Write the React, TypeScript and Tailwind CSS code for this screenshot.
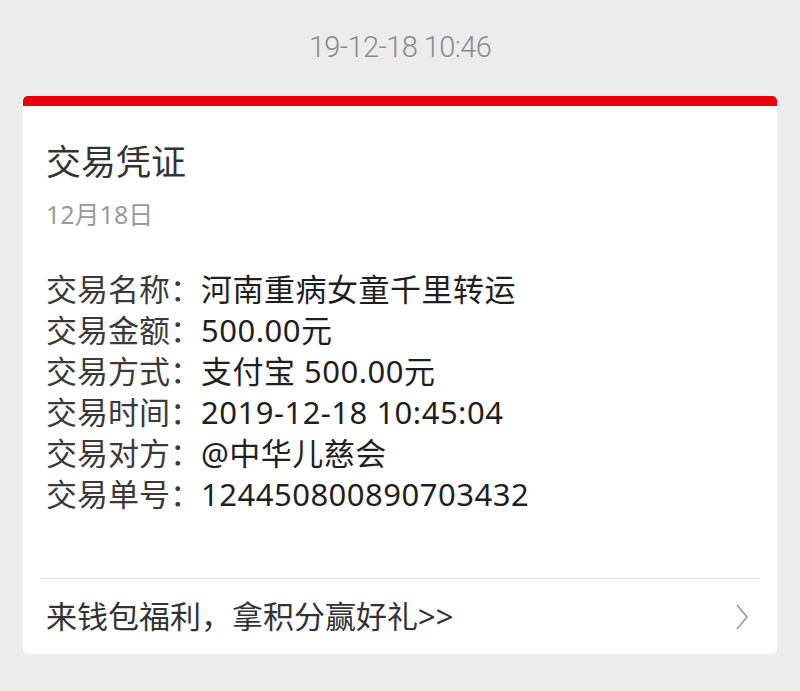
const rows: [string, string][] = [
  ["交易名称：", "河南重病女童千里转运"],
  ["交易金额：", "500.00元"],
  ["交易方式：", "支付宝 500.00元"],
  ["交易时间：", "2019-12-18 10:45:04"],
  ["交易对方：", "@中华儿慈会"],
  ["交易单号：", "124450800890703432"],
];

const cjk = { fontFamily: '"Noto Sans", "Noto Sans CJK SC", sans-serif' };

export default function App() {
  return (
    <div className="flex min-h-[691px] w-[800px] flex-col bg-[#ececec]" style={cjk}>
      {/* 时间戳 */}
      <div className="flex h-[96px] items-center justify-center">
        <span
          className="text-[29px] font-light tracking-[-0.6px] text-[#8a8a8a]"
          style={{ fontFamily: 'Roboto, "Noto Sans", sans-serif' }}
        >
          19-12-18 10:46
        </span>
      </div>

      {/* 凭证卡片 */}
      <div className="mx-[23px] overflow-hidden rounded-[5px] border-t-[10px] border-[#e8000b] bg-white">
        <div className="px-[23px] pt-[36px]">
          <p className="text-[35px] leading-[40px] text-[#333]">交易凭证</p>
          <p className="mt-[17px] text-[25px] leading-[30px] text-[#9a9a9a]">12月18日</p>

          <ul className="mt-[40px]">
            {rows.map(([k, v]) => (
              <li key={k} className="flex h-[41px] items-center text-[31px] leading-[41px]">
                <span className="text-[#3a3a3a]">{k}</span>
                <span className="tracking-[0.5px] text-[#1f1f1f]">{v}</span>
              </li>
            ))}
          </ul>
        </div>

        <div className="mx-[17px] mt-[63px] h-px bg-[#e3e3e3]" />

        <div className="flex h-[75px] items-center justify-between pl-[23px] pr-[28px]">
          <span className="text-[31px] text-[#333]">来钱包福利，拿积分赢好礼&gt;&gt;</span>
          <svg width="14" height="28" viewBox="0 0 14 28" fill="none">
            <path d="M2 2 L12 14 L2 26" stroke="#9a9a9a" strokeWidth="1.6" />
          </svg>
        </div>
      </div>
    </div>
  );
}
